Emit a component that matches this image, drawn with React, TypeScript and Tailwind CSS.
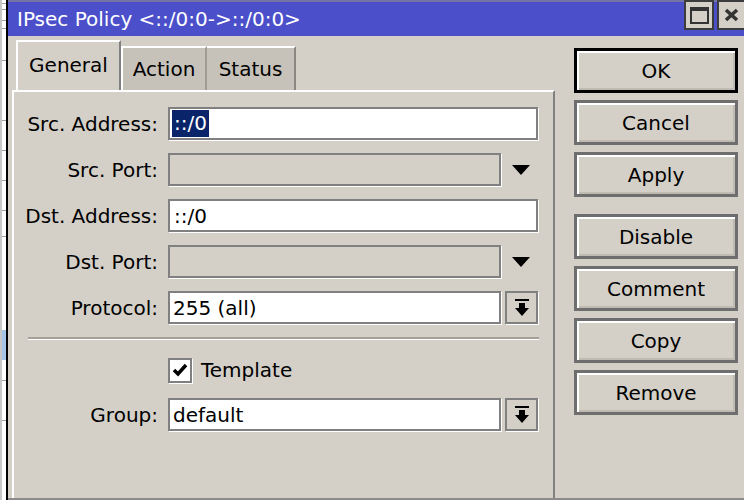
import React from "react";

const Triangle = () => (
  <svg width="18" height="10" viewBox="0 0 18 10">
    <polygon points="0,0 18,0 9,10" fill="#000" />
  </svg>
);

const DropButton = () => (
  <div className="w-[33px] h-[33px] ml-[4px] border-2 border-[#808080] shadow-[1px_1px_0_#fff] flex items-center justify-center">
    <svg width="16" height="18" viewBox="0 0 16 18">
      <rect x="1" y="0" width="14" height="2" fill="#000" />
      <rect x="5" y="4" width="6" height="6" fill="#000" />
      <polygon points="1,9 15,9 8,17" fill="#000" />
    </svg>
  </div>
);

type Kind = "text" | "disabled" | "combo";

function Field({ label, value, kind, selected }: { label: string; value?: string; kind: Kind; selected?: boolean }) {
  return (
    <div className="flex items-center h-[33px]">
      <div className="w-[144px] text-right whitespace-nowrap">{label}</div>
      <div className="ml-[10px] flex items-center">
        {kind === "text" ? (
          <div className="w-[370px] h-[33px] bg-white border-2 border-[#808080] shadow-[1px_1px_0_#fff] flex items-center pl-[2px]">
            {selected ? <span className="bg-[#0a246a] text-white px-[2px] leading-[27px]">{value}</span> : <span className="px-[2px]">{value}</span>}
          </div>
        ) : kind === "disabled" ? (
          <>
            <div className="w-[333px] h-[33px] bg-[#d4d0c8] border-2 border-[#808080] shadow-[1px_1px_0_#fff]" />
            <div className="w-[37px] flex justify-center pl-[3px]">
              <Triangle />
            </div>
          </>
        ) : (
          <>
            <div className="w-[333px] h-[33px] bg-white border-2 border-[#808080] shadow-[1px_1px_0_#fff] flex items-center pl-[3px]">
              {value}
            </div>
            <DropButton />
          </>
        )}
      </div>
    </div>
  );
}

function Btn({ label, primary }: { label: string; primary?: boolean }) {
  return (
    <div
      className={
        primary
          ? "h-[45px] border-[3px] border-black shadow-[inset_2px_2px_0_#fff,inset_-2px_-2px_0_#bfbbb3] flex items-center justify-center"
          : "h-[45px] border-[3px] border-[#6e6e6e] shadow-[inset_2px_2px_0_#fff,inset_-2px_-2px_0_#bfbbb3] flex items-center justify-center"
      }
    >
      {label}
    </div>
  );
}

export default function App() {
  const stripLines = [3, 9, 20, 28, 60, 120, 150, 180, 210, 236, 380, 420];
  return (
    <div className="w-[744px] h-[500px] flex overflow-hidden bg-[#d4d0c8] text-black text-[20px] font-['DejaVu_Sans',Verdana,sans-serif]">
      {/* window behind */}
      <div className="relative w-[6px] h-full bg-white border-l-2 border-[#c8c8c8]">
        {stripLines.map(y => (
          <div key={y} className="absolute left-0 right-0 h-px bg-[#a0a0a0]" style={{ top: y }} />
        ))}
        <div className="absolute left-0 right-0 top-[330px] h-[30px] bg-[#a6c4e6]" />
      </div>
      <div className="w-[2px] h-full bg-black" />

      <div className="flex-1 flex flex-col border-b-2 border-[#8c8c8c]">
        {/* title bar */}
        <div className="h-[36px] border-t-2 border-[#7474a6] bg-[#4b4fca] flex items-start text-white">
          <div className="flex-1 pl-[9px] h-[34px] flex items-center text-[20px] whitespace-nowrap">IPsec Policy &lt;::/0:0-&gt;::/0:0&gt;</div>
          <div className="flex -mt-[2px]">
            <div className="w-[30px] h-[30px] bg-[#d4d0c8] border-2 border-[#3c3c3c] flex items-center justify-center">
              <div className="w-[19px] h-[17px] border-2 border-t-[4px] border-[#333]" />
            </div>
            <div className="w-[27px] h-[30px] ml-[3px] bg-[#d4d0c8] border-2 border-r-0 border-[#3c3c3c] flex items-center pl-[5px]">
              <svg width="15" height="14" viewBox="0 0 15 14">
                <path d="M2 2 L13 12 M13 2 L2 12" stroke="#333" strokeWidth="3.5" />
              </svg>
            </div>
          </div>
        </div>

        {/* body */}
        <div className="flex-1 flex">
          <div className="w-[547px] pl-[4px] pt-[4px] flex flex-col">
            {/* tabs */}
            <div className="h-[50px] flex items-end pl-[4px]">
              <div className="w-[105px] h-[50px] border-l-2 border-t-2 border-white border-r-2 border-r-[#808080] flex items-center justify-center pb-[2px]">
                General
              </div>
              <div className="w-[86px] h-[44px] bg-[#c6c2ba] border-l-2 border-t-2 border-white border-r-2 border-r-[#a09c94] flex items-center justify-center">
                Action
              </div>
              <div className="w-[89px] h-[44px] bg-[#c6c2ba] border-t-2 border-white border-r-2 border-r-[#8a8680] flex items-center justify-center">
                Status
              </div>
            </div>
            {/* panel */}
            <div className="flex-1 border-t-2 border-l-2 border-white border-r-2 border-r-[#808080] pt-[15px] flex flex-col">
              <div className="flex flex-col gap-[13px]">
                <Field label="Src. Address:" value="::/0" kind="text" selected />
                <Field label="Src. Port:" kind="disabled" />
                <Field label="Dst. Address:" value="::/0" kind="text" />
                <Field label="Dst. Port:" kind="disabled" />
                <Field label="Protocol:" value="255 (all)" kind="combo" />
              </div>
              <div className="ml-[14px] mt-[13px] w-[511px] h-[2px] bg-[#a4a09a] shadow-[0_1px_0_#fff]" />
              <div className="flex items-center mt-[18px] ml-[154px] h-[26px]">
                <div className="w-[24px] h-[25px] border-2 border-[#808080] shadow-[1px_1px_0_#fff] bg-white flex items-center justify-center">
                  <svg width="16" height="14" viewBox="0 0 16 14">
                    <path d="M2 7 L6 11 L14 2" stroke="#000" strokeWidth="3.5" fill="none" />
                  </svg>
                </div>
                <span className="ml-[9px]">Template</span>
              </div>
              <div className="mt-[15px]">
                <Field label="Group:" value="default" kind="combo" />
              </div>
            </div>
          </div>

          {/* buttons */}
          <div className="ml-[19px] w-[164px] pt-[12px] flex flex-col">
            <div className="flex flex-col gap-[7px]">
              <Btn label="OK" primary />
              <Btn label="Cancel" />
              <Btn label="Apply" />
            </div>
            <div className="flex flex-col gap-[7px] mt-[17px]">
              <Btn label="Disable" />
              <Btn label="Comment" />
              <Btn label="Copy" />
              <Btn label="Remove" />
            </div>
          </div>
        </div>
      </div>
    </div>
  );
}
